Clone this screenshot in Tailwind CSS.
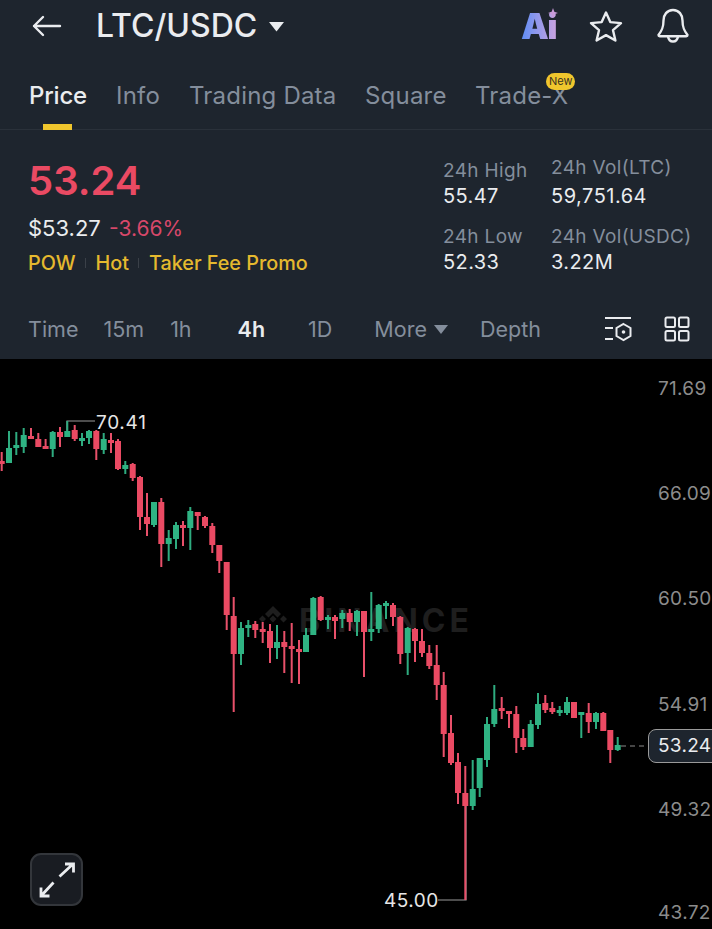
<!DOCTYPE html>
<html lang="en">
<head>
<meta charset="utf-8">
<title>LTC/USDC</title>
<script src="https://cdn.jsdelivr.net/npm/@tailwindcss/browser@4"></script>
</head>
<body class="m-0 bg-black">
<div class="w-[712px] h-[929px] overflow-hidden flex flex-col font-['Inter','Liberation_Sans',sans-serif] bg-black">
  <header class="h-[359px] shrink-0 bg-[#1e252e] flex flex-col">
    <div class="h-[52px] flex items-center pl-[32px] pr-[22px]">
      <svg class="w-[30px] h-[24px]" viewBox="0 0 30 24" fill="none" stroke="#eaecef" stroke-width="2.400" stroke-linecap="round" stroke-linejoin="round"><path d="M28 12H2M11 3l-9 9 9 9"/></svg>
      <h1 class="ml-[34px] text-[32px] font-medium text-[#eaecef] leading-none">LTC/USDC</h1>
      <svg class="ml-[11px] w-[17px] h-[11px]" viewBox="0 0 17 11" fill="#eaecef"><path d="M1 1h15L8.500 10.500z"/></svg>
      <div class="ml-auto relative w-[38px] h-[34px] flex items-center">
        <span class="text-[35px] font-black leading-none tracking-[-1.500px] bg-gradient-to-r from-[#5b8df5] to-[#c9a2e0] bg-clip-text text-transparent">Ai</span>
        <svg class="absolute right-[1px] top-[-1px] w-[10px] h-[10px]" viewBox="0 0 10 10" fill="#c89ad8"><path d="M5 0l1.300 3.700L10 5 6.300 6.300 5 10 3.700 6.300 0 5l3.700-1.300z"/></svg>
      </div>
      <svg class="ml-[30px] w-[34px] h-[33px]" viewBox="0 0 34 33" fill="none" stroke="#eaecef" stroke-width="2.400" stroke-linejoin="round"><path d="M17 2.500l4.300 9.600 10.700 1-8 7.100 2.400 10.300L17 25.100 7.600 30.500 10 20.200 2 13.100l10.700-1z"/></svg>
      <svg class="ml-[33px] w-[34px] h-[36px]" viewBox="0 0 34 36" fill="none" stroke="#eaecef" stroke-width="2.400" stroke-linejoin="round" stroke-linecap="round"><path d="M17 2c-6 0-9.500 4.800-9.500 10.500 0 7-1.500 10-5 14.500 0 .8.400 1.200 1.200 1.200h26.600c.8 0 1.200-.4 1.200-1.200-3.500-4.500-5-7.500-5-14.500C26.500 6.800 23 2 17 2z"/><path d="M12 28.500c.5 3 2.500 5 5 5s4.500-2 5-5"/></svg>
    </div>
    <nav class="h-[78px] relative flex items-start pl-[29px] gap-[29px] pt-[29px] border-b border-[#2a313a] text-[24px] leading-[30px] tracking-[0.2px] text-[#848e9c] shrink-0 whitespace-nowrap">
      <span class="font-medium text-[#eaecef] w-[58px] tracking-[-0.2px]">Price</span>
      <span class="w-[44px]">Info</span>
      <span class="w-[147px]">Trading Data</span>
      <span class="w-[81px]">Square</span>
      <span class="relative">Trade-X<span class="absolute right-[-7px] top-[-8px] w-[29px] h-[17px] rounded-full bg-[#f0c62d] text-[#3a3320] text-[11px] leading-[17px] text-center tracking-normal">New</span></span>
      <span class="absolute left-[43px] bottom-[-1px] w-[29px] h-[6px] bg-[#f0c62d]"></span>
    </nav>
    <section class="flex-1 relative flex justify-between pl-[28px] pr-[20px]">
      <div class="flex flex-col">
        <div class="mt-[27px] text-[40px] leading-[48px] font-semibold text-[#ea4a63]">53.24</div>
        <div class="mt-[9px] text-[22px] leading-[28px]"><span class="text-[#eaecef]">$53.27</span> <span class="ml-[2px] text-[21px] text-[#d8486a]">-3.66%</span></div>
        <div class="mt-[8px] flex items-center text-[19.800px] leading-[24px] font-medium text-[#e5b92e]">
          <span>POW</span><span class="mx-[9.500px] w-px h-[10px] bg-[#3a4048]"></span><span>Hot</span><span class="mx-[9.500px] w-px h-[10px] bg-[#3a4048]"></span><span>Taker Fee Promo</span>
        </div>
        <div class="mt-[40px] flex items-center text-[21.500px] leading-[28px] text-[#848e9c] w-[662px]">
          <span>Time</span>
          <span class="ml-[25px]">15m</span>
          <span class="ml-[26px]">1h</span>
          <span class="ml-[46px] font-semibold text-[#eaecef]">4h</span>
          <span class="ml-[43px]">1D</span>
          <span class="ml-[42px]">More</span>
          <svg class="ml-[7px] w-[14px] h-[9px]" viewBox="0 0 14 9" fill="#848e9c"><path d="M0 0h14L7 9z"/></svg>
          <span class="ml-[32px]">Depth</span>
          <svg class="ml-auto shrink-0 w-[28px] h-[26px]" viewBox="0 0 28 26" fill="none" stroke="#eaecef" stroke-width="2"><path d="M0 2h26M0 12h8M0 23h8"/><path d="M18.500 8l7 4v8l-7 4-7-4v-8z"/><circle cx="18.500" cy="16" r="1.800" fill="#eaecef" stroke="none"/></svg>
          <svg class="ml-[31px] shrink-0 w-[26px] h-[26px]" viewBox="0 0 26 26" fill="none" stroke="#eaecef" stroke-width="2"><rect x="1.500" y="1.500" width="9.500" height="9.500" rx="1.500"/><rect x="15" y="1.500" width="9.500" height="9.500" rx="1.500"/><rect x="1.500" y="15" width="9.500" height="9.500" rx="1.500"/><rect x="15" y="15" width="9.500" height="9.500" rx="1.500"/></svg>
        </div>
      </div>
      <div class="absolute left-[443px] top-[25px] grid grid-cols-[108px_auto] gap-y-[15px] text-[19px] leading-[25px] tracking-[0.35px]">
        <div class="mt-[3px]"><div class="text-[#848e9c]">24h High</div><div class="text-[#eaecef] text-[20px] tracking-[0.4px] mt-[1px]">55.47</div></div>
        <div><div class="text-[#848e9c]">24h Vol(LTC)</div><div class="text-[#eaecef] mt-[4px] text-[20px] tracking-[0.5px]">59,751.64</div></div>
        <div><div class="text-[#848e9c]">24h Low</div><div class="text-[#eaecef] text-[20px] tracking-[0.4px] mt-[1px]">52.33</div></div>
        <div><div class="text-[#848e9c]">24h Vol(USDC)</div><div class="text-[#eaecef] text-[20px] tracking-[0.4px] mt-[1px]">3.22M</div></div>
      </div>
    </section>
  </header>

  <main class="relative flex-1 bg-black overflow-hidden">
    <!-- watermark -->
    <div class="absolute left-[256px] top-[244px] flex items-center gap-[9px] text-[#1e1e1e]">
      <svg class="w-[34px] h-[34px]" viewBox="0 0 34 34" fill="#1e1e1e"><path d="M17 2l8 8-3.500 3.500L17 9l-4.500 4.500L9 10zM3 15l3.500-3.500L10 15l-3.500 3.500zM24 15l3.500-3.500L31 15l-3.500 3.500zM17 11.500l3.500 3.500-3.500 3.500-3.500-3.500z"/></svg>
      <span class="text-[32px] leading-[36px] font-bold tracking-[4px]">BINANCE</span>
    </div>

    <svg class="absolute left-0 top-[-359px] w-[712px] h-[929px]" viewBox="0 0 712 929" fill="none">
      <path stroke="#9a9a9a" stroke-width="1.200" d="M67 431V421H95M466 806V900H438"/>
      <path stroke="#e8506a" stroke-width="2" d="M1.700 452V471M31 428V439M38.300 433V447M45.600 439V449M60 427V447M74.700 425V441M96.300 430V460M111 433V453M118 439V470M132.700 463V481M140 476V530M147 493V536M161.300 498V567M183 521V546M197.700 512V530M205 516V528M212.300 523V553M219.300 545V573M226.700 562V630M233.700 597V712M255.300 621V638M262.700 622V643M270 624V663M284.300 631V673M291.700 623V683M299 640V684M320.700 596V621M335 615V639M349.700 609V631M364 611V677M393 603V626M400.300 616V664M415 628V662M422 629V657M429.300 645V669M436.700 645V700M443.700 672V757M451 715V765M458 753V804M465.300 766V806M501.700 697V719M509 712V728M516.300 706V753M523.300 729V750M545.300 695V713M552.300 702V714M574 702V718M588.700 703V733M603.300 712V731M610.300 730V763"/>
      <path stroke="#ea4a63" stroke-width="6" d="M1.700 461V464M31 436V439M38.300 439V447M45.600 446V449M60 432V437M74.700 430V439M96.300 431V449M111 440V443M118 441V469M132.700 464V478M140 477V517M147 517V524M161.300 502V544M183 525V528M197.700 512V516M205 517V526M212.300 526V545M219.300 545V561M226.700 562V615M233.700 616V654M255.300 624V630M262.700 629V632M270 631V648M284.300 642V647M291.700 646V649M299 649V652M320.700 597V620M335 617V621M349.700 613V622M364 611V632M393 605V617M400.300 617V654M415 629V641M422 641V653M429.300 653V666M436.700 665V685M443.700 685V734M451 733V763M458 762V793M465.300 793V806M501.700 708V711M509 711V714M516.300 714V738M523.300 738V747M545.300 703V710M552.300 708V712M574 702V718M588.700 713V722M603.300 713V731M610.300 730V750"/>
      <path stroke="#2eab7f" stroke-width="2" d="M9 431V463M16.300 432V455M23.700 428V453M52.700 431V457M67.300 421V437M82 433V446M89 430V444M103.700 433V454M125.300 461V474M154 502V527M168.700 530V561M176 522V549M190.300 507V550M241 622V665M248.300 620V637M277 625V659M306 628V652M313.300 597V635M328 615V629M342.300 610V628M357 610V636M371.300 592V641M378.700 604V633M386 601V619M407.700 627V675M472.700 760V810M479.700 758V797M487 717V767M494.300 685V727M530.700 720V747M538 693V729M559.700 706V716M567 697V715M581.300 712V738M596 712V729M617.700 737V751"/>
      <path stroke="#2fb383" stroke-width="6" d="M9 448V463M16.300 445V448M23.700 435V447M52.700 432V449M67.300 431V437M82 438V441M89 431V438M103.700 439V450M125.300 465V469M154 502V525M168.700 538V544M176 525V539M190.300 511V528M241 628V654M248.300 625V628M277 642V648M306 635V652M313.300 598V635M328 617V620M342.300 613V619M357 611V622M371.300 629V632M378.700 605V629M386 603V606M407.700 628V653M472.700 789V806M479.700 758V788M487 724V760M494.300 709V724M530.700 724V747M538 704V725M559.700 710V713M567 702V713M581.300 712V715M596 713V722M617.700 745V750"/>
      <path stroke="#e8506a" stroke-width="2" d="M465.300 806V900"/>
      <path stroke="#8a8a8a" stroke-width="1.200" stroke-dasharray="5 4" d="M621 746H648"/>
    </svg>

    <span class="absolute left-[96px] top-[52px] text-[19px] leading-[24px] text-[#e6e6e6] tracking-[0.700px]">70.41</span>
    <span class="absolute left-[384px] top-[530px] text-[19px] leading-[24px] text-[#e6e6e6] tracking-[0.500px]">45.00</span>

    <span class="absolute left-[658px] top-[18px] text-[19px] leading-[24px] text-[#8c8c8c] tracking-[0.300px]">71.69</span>
    <span class="absolute left-[658px] top-[123px] text-[19px] leading-[24px] text-[#8c8c8c] tracking-[0.300px]">66.09</span>
    <span class="absolute left-[658px] top-[228px] text-[19px] leading-[24px] text-[#8c8c8c] tracking-[0.300px]">60.50</span>
    <span class="absolute left-[658px] top-[334px] text-[19px] leading-[24px] text-[#8c8c8c] tracking-[0.300px]">54.91</span>
    <span class="absolute left-[658px] top-[439px] text-[19px] leading-[24px] text-[#8c8c8c] tracking-[0.300px]">49.32</span>
    <span class="absolute left-[658px] top-[542px] text-[19px] leading-[24px] text-[#8c8c8c] tracking-[0.300px]">43.72</span>

    <div class="absolute left-[648px] top-[370px] w-[72px] h-[34px] rounded-[8px] border border-[#9a9a9a] bg-[#1e252e] pl-[9px] text-[19px] leading-[32px] text-[#eaecef] tracking-[0.300px]">53.24</div>

    <button class="absolute left-[30px] top-[494px] w-[53px] h-[53px] rounded-[11px] border-2 border-[#33363b] bg-[#191c22] flex items-center justify-center">
      <svg class="w-[38px] h-[38px]" viewBox="0 0 38 38" fill="none" stroke="#eaecef" stroke-width="2.800"><path d="M21.500 15.500L35 3M27 3h8.500v8.500M15.500 21.500L3 35M3 26.500V35h8.500"/></svg>
    </button>
  </main>
</div>
</body>
</html>
